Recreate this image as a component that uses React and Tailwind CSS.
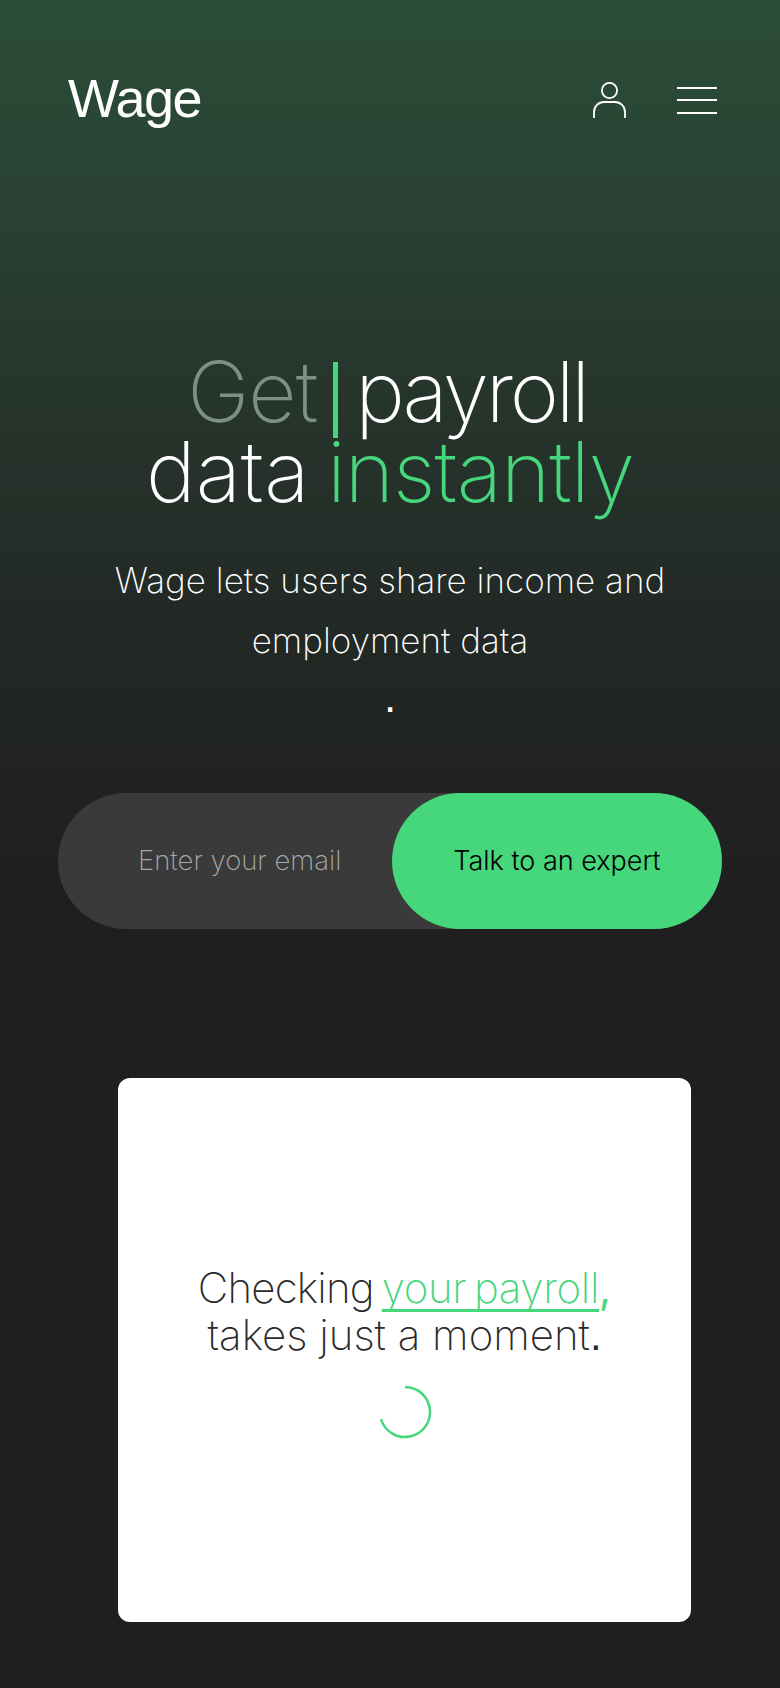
export default function App() {
  return (
    <div className="min-h-[1688px] bg-[#1f1f1f] bg-[linear-gradient(180deg,#2b4d38_0px,#2a4535_150px,#26352c_400px,#232a26_600px,#1f1f1f_880px)] font-['Inter',sans-serif] text-white">
      {/* header */}
      <header className="flex items-center justify-between pl-[68px] pr-[63px] pt-[69px]">
        <span className="-mt-[4px] font-['Liberation_Sans',sans-serif] text-[54px] leading-[66px] tracking-[-1.5px]">Wage</span>
        <div className="flex items-center gap-[51px]">
          <svg width="33" height="36" viewBox="0 0 33 36" fill="none" stroke="white" strokeWidth="1.8">
            <circle cx="16.5" cy="8.5" r="7.6" />
            <path d="M1 36v-6a10 10 0 0 1 10-10h11a10 10 0 0 1 10 10v6" />
          </svg>
          <div className="flex w-[40px] flex-col gap-[10.5px]">
            <div className="h-[2px] bg-white" />
            <div className="h-[2px] bg-white" />
            <div className="h-[2px] bg-white" />
          </div>
        </div>
      </header>

      {/* hero */}
      <section className="mt-[221px] flex flex-col items-center text-center">
        <h1 className="text-[84px] leading-[80px] font-extralight [word-spacing:-6px]">
          <span className="tracking-[-1px] text-[#7e8f85]">Get</span>
          <span className="mr-[17px] ml-[16px] -mt-[10px] inline-block h-[76px] w-[5px] translate-y-[16px] bg-[#46d67c]" />
          <span className="mr-[6px] tracking-[-3.3px]">payroll</span>
          <br />
          data <span className="tracking-[-1px] text-[#46d67c]">instantly</span>
        </h1>
        <p className="mt-[38px] w-[600px] text-[35px] leading-[60px] font-extralight">
          Wage lets users share income and employment data
        </p>
        <p className="-mt-[3px] font-['Liberation_Sans',sans-serif] text-[44px] leading-[60px]">.</p>
      </section>

      {/* email form */}
      <div className="mx-[58px] mt-[66px] flex h-[136px] items-center rounded-full bg-[#393a39]">
        <span className="flex-1 pl-[80px] text-[27.5px] font-extralight text-[#a8a9a8]">Enter your email</span>
        <button className="h-full w-[330px] rounded-full bg-[#46d67c] text-[27px] font-light text-black">Talk to an expert</button>
      </div>

      {/* loading card */}
      <div className="mt-[149px] ml-[118px] flex h-[544px] w-[573px] flex-col items-center justify-center rounded-[12px] bg-white pt-[2px] text-[#2a2a2a]">
        <p className="text-center text-[42px] leading-[47px] font-extralight">
          <span className="[word-spacing:-4px]">
            <span className="tracking-[-0.8px]">Checking</span>{" "}
            <span className="tracking-[-0.3px] text-[#46d67c] underline decoration-[2.5px] underline-offset-[6px] [text-decoration-skip-ink:none]">your payroll</span><span className="font-normal text-[#46d67c]">,</span>
          </span>
          <br />
          takes just a moment<span className="font-['Liberation_Sans',sans-serif] font-normal">.</span>
        </p>
        <svg className="mt-[26px]" width="54" height="54" viewBox="0 0 54 54" fill="none" stroke="#46d67c" strokeWidth="2.5">
          <path d="M27 2a25 25 0 1 1-24 32" />
        </svg>
      </div>
    </div>
  );
}
